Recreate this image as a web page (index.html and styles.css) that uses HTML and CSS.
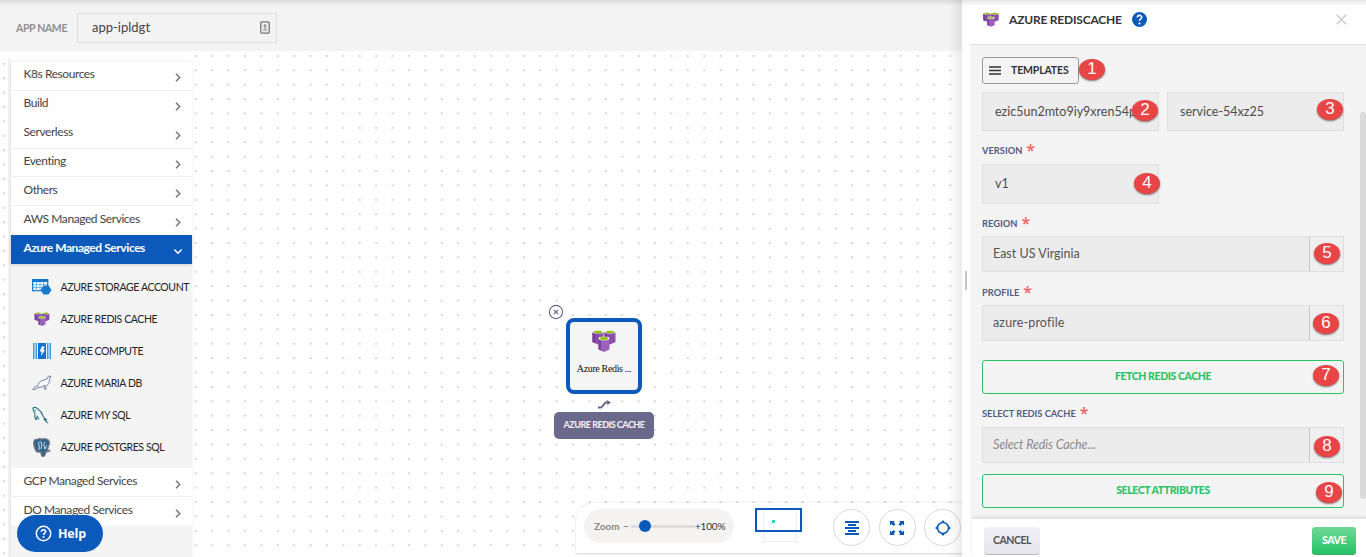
FILE: index.html
```html
<!DOCTYPE html>
<html lang="en">
<head>
<meta charset="utf-8">
<title>App designer</title>
<link rel="stylesheet" href="styles.css">
</head>
<body>
<svg class="defs" width="0" height="0">
  <symbol id="redis" viewBox="0 0 24 22">
    <path fill="#8a4fae" d="M.5 2v10L6 14.500l5.500-2.500V2zM12.500 2v10l5.500 2.500 5.500-2.500V2z"/>
    <path fill="#733a98" d="M.5 2l2.500 1v10.200L.5 12zM12.500 2l2.500 1v10.200L12.500 12z"/>
    <ellipse cx="6" cy="2" rx="5.500" ry="1.600" fill="#f1eadf"/><ellipse cx="18" cy="2" rx="5.500" ry="1.600" fill="#f1eadf"/>
    <ellipse cx="6" cy="2" rx="4.200" ry="1.300" fill="#8fc400"/><ellipse cx="18" cy="2" rx="4.200" ry="1.300" fill="#8fc400"/>
    <path fill="#9b62bd" d="M6.500 8.500v11l5.500 2.500 5.500-2.500v-11z"/>
    <path fill="#7c429f" d="M6.500 8.500l2.500 1v11l-2.500-1z"/>
    <ellipse cx="12" cy="8.500" rx="5.500" ry="1.900" fill="#f1eadf"/><ellipse cx="12" cy="8.500" rx="4.200" ry="1.400" fill="#8fc400"/>
  </symbol>
  <symbol id="chev" viewBox="0 0 6 9"><path d="M1 .8 4.700 4.500 1 8.200" fill="none" stroke="currentColor" stroke-width="1.500"/></symbol>
</svg>
<div class="app">
  <main class="work">
    <header class="top">
      <label class="app-label">APP NAME</label>
      <div class="app-input"><span>app-ipldgt</span>
        <svg width="10" height="13" viewBox="0 0 10 13"><rect x=".8" y=".8" width="8.400" height="11.400" rx="1" fill="#eee" stroke="#777" stroke-width="1.300"/><path d="M5 3v5M3.500 5h3M3 9h4" stroke="#888" fill="none" stroke-width="1.200"/></svg>
      </div>
    </header>
    <section class="canvas">
      <div class="strip"></div>
      <nav class="side">
        <div class="row"><span>K8s Resources</span><svg class="ch"><use href="#chev"/></svg></div>
        <div class="row noline"><span>Build</span><svg class="ch"><use href="#chev"/></svg></div>
        <div class="row"><span>Serverless</span><svg class="ch"><use href="#chev"/></svg></div>
        <div class="row"><span>Eventing</span><svg class="ch"><use href="#chev"/></svg></div>
        <div class="row"><span>Others</span><svg class="ch"><use href="#chev"/></svg></div>
        <div class="row noline"><span>AWS Managed Services</span><svg class="ch"><use href="#chev"/></svg></div>
        <div class="row open"><span>Azure Managed Services</span><svg class="ch down"><use href="#chev"/></svg></div>
        <div class="sub">
          <div class="item"><svg width="20" height="18" viewBox="0 0 20 18"><rect x=".7" y="1.700" width="15" height="11" fill="#fff" stroke="#1478cf" stroke-width="1.300"/><path d="M0 1h16v3H0z" fill="#1478cf"/><path d="M1 6.700h14M1 9.500h14M4.500 4v9M8 4v9M11.500 4v9" stroke="#69b5ed"/><path d="M11.500 7.500h5L19.500 12l-3 4.500h-5L8.500 12z" fill="#1478cf"/></svg><span>AZURE STORAGE ACCOUNT</span></div>
          <div class="item"><svg width="16" height="14"><use href="#redis"/></svg><span>AZURE REDIS CACHE</span></div>
          <div class="item"><svg width="18" height="16" viewBox="0 0 18 16"><path d="M0 0h1.500v16H0zM2.500 0H4v16H2.500zM14 0h1.500v16H14zM16.500 0H18v16h-1.500z" fill="#3b9be5"/><path d="M5 0h8v16H5z" fill="#0f74d1"/><path d="M8.700 3.500h3L10.300 7H12l-4 6 .8-4.500H6.700z" fill="#fff"/></svg><span>AZURE COMPUTE</span></div>
          <div class="item"><svg width="20" height="16" viewBox="0 0 20 16"><path d="M19 1.500 16.500 1l-1.500 3-5 1.500c-3 1-3.500 3.500-4.500 5.500l-3.500 1.500-1.300 2.200 2.300-.2 3-2 4-.5 2-1.500h1l-1 3 2 1-.3-3 2.300-2c1.500-1 1-3 1.500-5.500z" fill="#f7f9fc" stroke="#667c9d" stroke-width=".9"/></svg><span>AZURE MARIA DB</span></div>
          <div class="item"><svg width="20" height="18" viewBox="0 0 20 18"><path d="M4 14l-1-2.500c-.7-1 .5-2 0-3.500C2.500 6 .5 3.500 1 2c2-1.500 4 0 5 1 3 2 4 4 5 7 .5 2 2 3 4 4l-2.500-.2L16 17.200M3 4l.5 1M4 14l1.200-3.500L7 13.500" fill="none" stroke="#28728b" stroke-width="1.100"/></svg><span>AZURE MY SQL</span></div>
          <div class="item"><svg width="18" height="19" viewBox="0 0 18 19"><path d="M5 1c2-1 3 0 4 0 3-1 7 0 7.500 3 0 3-1.500 5-2 8l2.500.5c-1 1.500-3 1.500-4 1.200-.5 2-.5 4-2.300 4.800-2.500.3-2.700-2-2.700-4.500-2 1-3-1-4 .2C1.500 12 0 5.500 1 3c.5-1.500 2-2 4-2z" fill="#35658b" stroke="#777e86" stroke-width="1.200"/><path d="M6 3.500c-1 3 1 4 0 8.500M7 4c2-1 2 3 1 7M12 4c-2 2-1 4 0 7l1.500-3.500" fill="none" stroke="#e4edf3" stroke-width=".9"/></svg><span>AZURE POSTGRES SQL</span></div>
        </div>
        <div class="row"><span>GCP Managed Services</span><svg class="ch"><use href="#chev"/></svg></div>
        <div class="row noline"><span>DO Managed Services</span><svg class="ch"><use href="#chev"/></svg></div>
      </nav>
      <div class="board">
        <svg class="node-x" width="16" height="16" viewBox="0 0 16 16"><circle cx="8" cy="8" r="6.600" fill="#fff" stroke="#666589" stroke-width="1.100"/><path d="m5.800 5.800 4.400 4.400m0-4.400-4.400 4.400" stroke="#666589" stroke-width="1.200"/></svg>
        <div class="node"><svg width="24" height="22"><use href="#redis"/></svg><span>Azure Redis ...</span></div>
        <svg class="link" width="14" height="9" viewBox="0 0 14 9"><path d="M1 7.500h2.500C6 7.500 6.500 2.500 9.500 2.500H11" fill="none" stroke="#666589" stroke-width="2"/><path d="M10 0l4 2.500L10.500 5z" fill="#666589"/></svg>
        <div class="tip"><span>AZURE REDIS CACHE</span></div>
      </div>
    </section>
    <button class="help"><svg width="17" height="17" viewBox="0 0 17 17"><circle cx="8.500" cy="8.500" r="7.200" fill="none" stroke="#fff" stroke-width="1.500"/><path d="M6.300 6.700c.2-2.800 4.500-2.500 4.300.1-.1 1.500-2.100 1.500-2.100 3.100" fill="none" stroke="#fff" stroke-width="1.600"/><circle cx="8.500" cy="12" r="1" fill="#fff"/></svg><span>Help</span></button>
    <div class="tools">
      <div class="zoom"><span class="z1">Zoom</span><span class="z2">−</span><div class="track"><i></i></div><span class="z3">+100%</span></div>
      <div class="map"><div class="map-doc"></div><div class="map-view"><i></i></div></div>
      <div class="round r1"><svg width="16" height="14" viewBox="0 0 16 14"><path d="M1 1h14M4 4h8M1 7h14M4 10h8M1 13h14" stroke="#0b5abb" stroke-width="1.800"/></svg></div>
      <div class="round"><svg width="14" height="14" viewBox="0 0 14 14"><path d="M0 0h5L3.700 1.300 5.500 3.200 3.500 5 1.500 3 0 4.500zM14 0H9l1.300 1.300-1.800 1.900L10.500 5l2-2L14 4.500zM0 14h5l-1.300-1.300 1.800-1.900L3.500 9l-2 2L0 9.500zM14 14H9l1.300-1.300-1.800-1.900L10.500 9l2 2L14 9.500z" fill="#0b5abb"/></svg></div>
      <div class="round"><svg width="16" height="16" viewBox="0 0 16 16"><circle cx="8" cy="8" r="5.500" fill="none" stroke="#0b5abb" stroke-width="1.500"/><path d="M6 2.500 8 0l2 2.500zM6 13.500 8 16l2-2.500zM2.500 6 0 8l2.500 2zM13.500 6 16 8l-2.500 2z" fill="#0b5abb"/></svg></div>
    </div>
  </main>
  <aside class="panel">
    <div class="grip"><i></i></div>
    <div class="pane">
      <header class="head"><svg width="16" height="15"><use href="#redis"/></svg><h1>AZURE REDISCACHE</h1>
        <svg width="15" height="15" viewBox="0 0 15 15"><circle cx="7.500" cy="7.500" r="7.500" fill="#0b5abb"/><path d="M5.300 5.500c.2-3 4.600-2.600 4.400 0-.1 1.600-2.200 1.600-2.200 3.200" fill="none" stroke="#fff" stroke-width="1.600"/><circle cx="7.500" cy="11.500" r="1.100" fill="#fff"/></svg>
        <svg class="close" width="11" height="11" viewBox="0 0 11 11"><path d="m.7.7 9.600 9.600m0-9.600L.7 10.300" stroke="#c7c7c7" stroke-width="1.300"/></svg></header>
      <div class="body">
        <button class="tpl"><svg width="12" height="9" viewBox="0 0 12 9"><path d="M0 1h12M0 4.500h12M0 8h12" stroke="#333" stroke-width="1.400"/></svg><span>TEMPLATES</span><b class="badge b1">1</b></button>
        <div class="pair">
          <div class="box"><span>ezic5un2mto9iy9xren54p</span><b class="badge b2">2</b></div>
          <div class="box"><span>service-54xz25</span><b class="badge b3">3</b></div>
        </div>
        <label class="lab l1"><span>VERSION</span><em>*</em></label>
        <div class="box ver"><span>v1</span><b class="badge b4">4</b></div>
        <label class="lab l2"><span>REGION</span><em>*</em></label>
        <div class="sel"><span>East US Virginia</span><b class="badge b5">5</b></div>
        <label class="lab l3"><span>PROFILE</span><em>*</em></label>
        <div class="sel"><span class="profile">azure-profile</span><b class="badge b6">6</b></div>
        <button class="green fetch"><span>FETCH REDIS CACHE</span><b class="badge b7">7</b></button>
        <label class="lab l4"><span>SELECT REDIS CACHE</span><em>*</em></label>
        <div class="sel"><span class="hint">Select Redis Cache...</span><b class="badge b8">8</b></div>
        <button class="green attrs"><span>SELECT ATTRIBUTES</span><b class="badge b9">9</b></button>
        <div class="scroll"></div>
      </div>
      <footer class="foot"><button class="cancel"><span>CANCEL</span></button><button class="save"><span>SAVE</span></button></footer>
    </div>
  </aside>
</div>
</body>
</html>
```
FILE: styles.css
```css
* { box-sizing: border-box; }
body { margin: 0; width: 1366px; height: 557px; overflow: hidden; font-family: Lato, "Open Sans", sans-serif; color: #333; }
button { font: inherit; margin: 0; padding: 0; }
span { white-space: nowrap; }
svg { flex: none; }
.defs { position: absolute; }
.app { display: flex; height: 557px; position: relative; }
.app::after { content: ""; position: absolute; inset: 0 0 auto; height: 6px; background: linear-gradient(rgba(0,0,0,.1), transparent); }
.work { width: 962px; height: 557px; position: relative; overflow: hidden; }
.work::after { content: ""; position: absolute; inset: 0 0 0 auto; width: 14px; background: linear-gradient(to right, transparent, rgba(0,0,0,.08)); }

.top { height: 51px; background: #f3f3f3; display: flex; align-items: center; padding: 4px 0 0 16px; }
.app-label { width: 61px; font-size: 10.500px; font-weight: 700; letter-spacing: -.35px; color: #909090; }
.app-input { width: 200px; height: 30px; border: 1px solid #dedede; display: flex; align-items: center; justify-content: space-between; padding: 0 6px 1px 14px; font-size: 13px; color: #444; }

.canvas { height: 506px; display: flex; background: #fff; }
.strip { width: 11px; margin-top: 6px; background: radial-gradient(circle at 4px 7px, #dadada 1px, transparent 1.400px) 0 0 / 16px 14.400px; border-right: 3px solid #f7f7f7; }
.side { width: 181px; margin-top: 11px; background: #f4f4f4; box-shadow: -1px 0 4px rgba(0,0,0,.1); font-size: 12px; letter-spacing: -.43px; display: flex; flex-direction: column; }
.row { height: 28.850px; background: #fff; border-bottom: 1px solid #eee; display: flex; justify-content: space-between; align-items: center; padding: 0 11px 4px 12.500px; color: #444; }
.row.noline { border-bottom-color: #fff; }
.ch { width: 6px; height: 9px; color: #777; position: relative; top: 4px; }
.ch.down { color: #fff; transform: rotate(90deg); }
.row.open { background: #0b5abb; color: #fff; font-weight: 700; border: 0; box-shadow: 0 1px 3px rgba(0,0,0,.15); }
.sub { height: 204.500px; padding-top: 8px; flex: none; }
.item { height: 32px; display: flex; align-items: center; font-size: 10.500px; letter-spacing: -.4px; color: #222; padding: 0 0 1px 21px; }
.item svg { width: 20px; margin-right: 8.500px; }

.board { flex: 1; position: relative; background: radial-gradient(circle at 3.500px 5px, #d4d4d4 .9px, transparent 1.300px) 0 0 / 16.420px 14.400px; }
.node-x { position: absolute; left: 356px; top: 253px; }
.node { position: absolute; left: 374px; top: 267px; width: 76px; height: 76px; border: 4px solid #0b5abb; border-radius: 8px; background: #f5f5f5; display: flex; flex-direction: column; align-items: center; padding-top: 8px; }
.node span { font: 10px/12px "Liberation Serif", serif; color: #111; margin-top: 11px; letter-spacing: -.35px; }
.link { position: absolute; left: 405px; top: 349px; }
.tip { position: absolute; left: 362px; top: 361px; width: 100px; height: 27px; border-radius: 5px; background: #6a698b; color: #f1e8ee; font-size: 9px; font-weight: 900; letter-spacing: -.5px; display: flex; align-items: center; justify-content: center; padding-bottom: 2px; }
.help { position: absolute; left: 17px; top: 515px; width: 86px; height: 37px; border: 0; border-radius: 19px; background: #0b5abb; color: #fff; display: flex; align-items: center; padding-left: 18px; gap: 6px; font: 700 12.500px "Open Sans", sans-serif; letter-spacing: -.2px; }

.tools { position: absolute; left: 576px; top: 503px; width: 390px; height: 51px; display: flex; background: #fff; border-radius: 18px 0 0 0; border-bottom: 1px solid #e1e1e1; box-shadow: 0 0 3px rgba(0,0,0,.14); }
.zoom { width: 150px; height: 34px; margin: 6px 0 0 8px; border-radius: 17px; background: #f4f3f2; display: flex; align-items: center; padding-left: 10px; font-size: 10px; font-weight: 700; color: #888; }
.z1 { width: 29px; } .z2 { width: 8px; }
.track { width: 64px; height: 3px; background: #ddd; position: relative; }
.track i { position: absolute; left: 8px; top: -5px; width: 12px; height: 12px; border-radius: 50%; background: #0b5abb; }
.z3 { font-weight: 400; color: #333; letter-spacing: -.2px; }
.map { width: 47px; height: 36px; margin: 5px 0 0 21px; position: relative; }
.map-doc { width: 34px; height: 34px; margin-left: 8px; border: 1px solid #eee; }
.map-view { position: absolute; inset: 0 0 auto; height: 24px; border: 2px solid #0b5abb; }
.map-view i { position: absolute; left: 15px; top: 10px; width: 3px; height: 3px; background: #25d6c5; }
.round { width: 37px; height: 37px; margin: 6px 0 0 8.500px; border: 1px solid #d8d8d8; border-radius: 50%; display: grid; place-items: center; flex: none; }
.r1 { margin-left: 31px; }

.panel { width: 404px; display: flex; background: #fff; }
.grip { width: 8px; padding: 271px 0 0 3px; }
.grip i { display: block; width: 2px; height: 19px; background: #c4c4c4; }
.pane { width: 396px; display: flex; flex-direction: column; }
.head { height: 44px; display: flex; align-items: center; padding: 0 19px 5px 13px; }
.head h1 { width: 123px; margin: 0 0 0 10px; font-size: 12px; font-weight: 700; letter-spacing: -.2px; white-space: nowrap; }
.close { margin-left: auto; }
.body { height: 474px; background: #f4f4f4; border-top: 1px solid #e0e0e0; padding: 12px 22px 0 12px; position: relative; display: flex; flex-direction: column; }
.tpl { width: 97px; height: 27px; border: 1px solid #999; border-radius: 3px; background: transparent; display: flex; align-items: center; padding: 0 0 1px 6px; gap: 10px; font-size: 10.500px; font-weight: 700; letter-spacing: -.15px; color: #333; position: relative; }
.pair { display: flex; gap: 8px; margin-top: 8px; }
.box { width: 177px; height: 39px; background: #ececec; border: 1px solid #dfdfdf; display: flex; align-items: center; padding: 0 0 1px 12px; font-size: 12.500px; color: #4d4d4d; position: relative; flex: none; }
.ver { height: 40px; }
.lab { display: flex; align-items: center; font-size: 9.300px; font-weight: 700; color: #505c80; position: relative; }
.lab em { font: 600 16px/10px "Open Sans", sans-serif; color: #ee6262; margin-left: 4px; margin-top: -1px; }
.l1 { height: 33px; padding-top: 6px; } .l2 { height: 32px; padding-top: 7px; } .l3 { height: 33px; padding-top: 8px; } .l4 { height: 33px; padding-top: 6px; }
.sel { width: 362px; height: 36px; background: linear-gradient(to right, #ececec 326px, #c8c8c8 326px 327px, #efefef 327px); border: 1px solid #dfdfdf; display: flex; align-items: center; padding: 0 0 1px 10px; font-size: 12.500px; color: #555; position: relative; flex: none; }
.profile { letter-spacing: .15px; }
.green { width: 362px; height: 34px; border: 1px solid #26c467; border-radius: 3px; background: transparent; color: #26c467; font-size: 10.500px; font-weight: 900; letter-spacing: -.4px; position: relative; display: flex; align-items: center; justify-content: center; padding-bottom: 2px; flex: none; }
.fetch { margin-top: 19px; } .attrs { margin-top: 11px; }
.hint { font-style: italic; color: #8b8b8b; letter-spacing: -.13px; }
.badge { position: absolute; width: 26px; height: 21px; border-radius: 50%; background: #e94446; color: #fff; font: 400 17px/19px "Liberation Sans", sans-serif; letter-spacing: 0; text-align: center; box-shadow: 0 1px 2px rgba(0,0,0,.5); }
.b1 { left: 96px; top: 1px; } .b2 { left: 149px; top: 7px; } .b3 { left: 149px; top: 6px; } .b4 { left: 151px; top: 8px; }
.b5 { left: 331px; top: 6px; } .b6 { left: 330px; top: 7px; } .b7 { left: 330px; top: 4px; } .b8 { left: 331px; top: 8px; } .b9 { left: 333px; top: 7px; }
.scroll { position: absolute; left: 390px; top: 67px; width: 6px; height: 387px; border-radius: 3px; background: #dadada; }
.foot { flex: 1; margin-left: 2px; background: #fff; border-top: 1px solid #e1e1e1; display: flex; justify-content: space-between; padding: 8px 10px 0 12px; box-shadow: 0 -1px 3px rgba(0,0,0,.1); position: relative; }
.foot button { height: 28px; border: 0; border-bottom: 1px solid #b8b8be; border-radius: 3px; font-size: 10.500px; font-weight: 700; letter-spacing: -.45px; display: flex; align-items: center; justify-content: center; padding-bottom: 2px; }
.foot .cancel { width: 56px; background: linear-gradient(#f1f0f5, #e6e5ed); color: #555; }
.foot .save { width: 44px; background: linear-gradient(#6fd897, #27c467); color: #fff; font-weight: 900; border-color: #4aa46a; }
```
